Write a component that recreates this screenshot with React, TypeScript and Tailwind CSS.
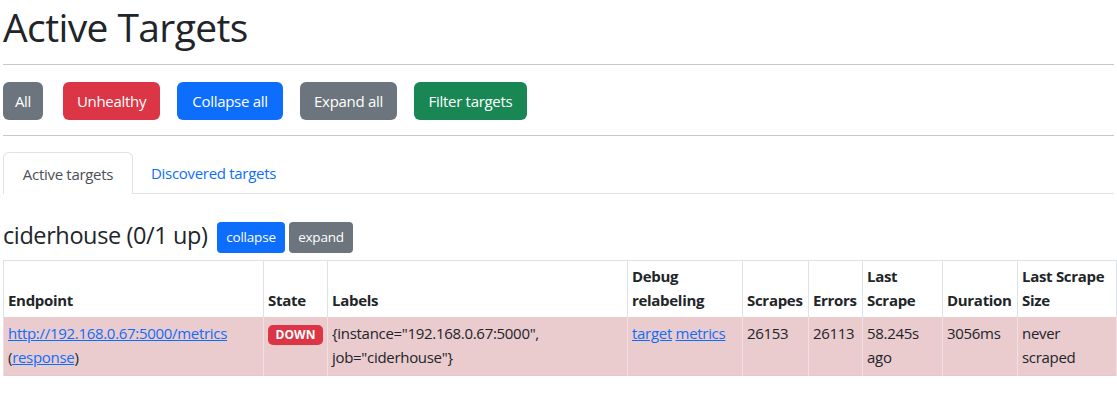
import React from "react";

const buttons = [
  { label: "All", cls: "bg-[#6c757d] w-[40px]" },
  { label: "Unhealthy", cls: "bg-[#dc3545] w-[97px]" },
  { label: "Collapse all", cls: "bg-[#0d6efd] w-[106px]" },
  { label: "Expand all", cls: "bg-[#6c757d] w-[97px]" },
  { label: "Filter targets", cls: "bg-[#198754] w-[113px]" },
];

const headers = [
  { label: "Endpoint", w: "w-[260px]" },
  { label: "State", w: "w-[64px]" },
  { label: "Labels", w: "w-[300px]" },
  { label: "Debug relabeling", w: "w-[115px]" },
  { label: "Scrapes", w: "w-[66px]" },
  { label: "Errors", w: "w-[54px]" },
  { label: "Last Scrape", w: "w-[80px]" },
  { label: "Duration", w: "w-[75px]" },
  { label: "Last Scrape Size", w: "w-[99px]" },
];

const td = "align-top px-[4px] pt-[4px] pb-[6px] border-x border-[#f1dfe1] leading-6";

export default function App() {
  return (
    <div className="w-[1117px] h-[401px] overflow-hidden bg-white px-[3px] text-[#212529] font-['Open_Sans','Noto_Sans',sans-serif] text-[16px]">
      <h1 className="pt-[3px] text-[39px] leading-[48px] font-normal tracking-[-0.6px]">Active Targets</h1>
      <hr className="mt-[13px] border-t border-[#c8c8c8]" />

      <div className="flex mt-[17px] gap-[17px]">
        {buttons.map((b, i) => (
          <button
            key={b.label}
            className={`${b.cls} ${i === 1 ? "ml-[3px]" : ""} h-[38px] rounded-[6px] text-white text-[15px] tracking-[-0.3px] leading-6 flex items-center justify-center`}
          >
            {b.label}
          </button>
        ))}
      </div>
      <hr className="mt-[15px] border-t border-[#c8c8c8]" />

      <nav className="mt-[16px] flex border-b border-[#dee2e6] h-[42px]">
        <div className="w-[130px] h-[42px] pt-[2px] border border-b-0 border-[#dee2e6] rounded-t-[6px] bg-white text-[#495057] flex items-center justify-center text-[15px] tracking-[-0.3px]">
          Active targets
        </div>
        <div className="ml-[2px] px-[16px] pt-[2px] h-[41px] flex items-center text-[#0d6efd] text-[15px] tracking-[-0.3px]">
          Discovered targets
        </div>
      </nav>

      <div className="mt-[27px] flex items-center">
        <h4 className="text-[23.5px] leading-[29px] tracking-[-0.4px] w-[214px] mb-[3px]">ciderhouse (0/1 up)</h4>
        <button className="w-[68px] h-[31px] rounded-[4px] bg-[#0d6efd] text-white text-[13.5px] tracking-[-0.2px]">collapse</button>
        <button className="ml-[4px] w-[64px] h-[31px] rounded-[4px] bg-[#6c757d] text-white text-[13.5px] tracking-[-0.2px]">expand</button>
      </div>

      <table className="mt-[7px] table-fixed border-collapse w-[1113px] text-[15px] tracking-[-0.3px]">
        <colgroup>
          {headers.map((h) => (
            <col key={h.label} className={h.w} />
          ))}
        </colgroup>
        <thead>
          <tr className="border-t border-[#dee2e6]">
            {headers.map((h) => (
              <th
                key={h.label}
                className="align-bottom text-left font-bold px-[4px] pt-[3px] pb-[5px] leading-6 border-x border-[#dee2e6] h-[54px]"
              >
                {h.label}
              </th>
            ))}
          </tr>
        </thead>
        <tbody>
          <tr className="bg-[#eacbce] border-b border-[#efc4c8]">
            <td className={td}>
              <a className="text-[#0d6efd] underline">http://192.168.0.67:5000/metrics</a>
              <br />(<a className="text-[#0d6efd] underline">response</a>)
            </td>
            <td className={td}>
              <span className="inline-flex items-center justify-center mt-[4px] w-[55px] h-[20px] rounded-[5px] bg-[#dc3545] text-white text-[12px] font-bold tracking-normal leading-none">
                DOWN
              </span>
            </td>
            <td className={td}>
              {'{instance="192.168.0.67:5000",'}
              <br />
              {'job="ciderhouse"}'}
            </td>
            <td className={td}>
              <a className="text-[#0d6efd] underline">target</a>{" "}
              <a className="text-[#0d6efd] underline">metrics</a>
            </td>
            <td className={td}>26153</td>
            <td className={td}>26113</td>
            <td className={td}>
              58.245s
              <br />
              ago
            </td>
            <td className={td}>3056ms</td>
            <td className={td}>
              never
              <br />
              scraped
            </td>
          </tr>
        </tbody>
      </table>
    </div>
  );
}
